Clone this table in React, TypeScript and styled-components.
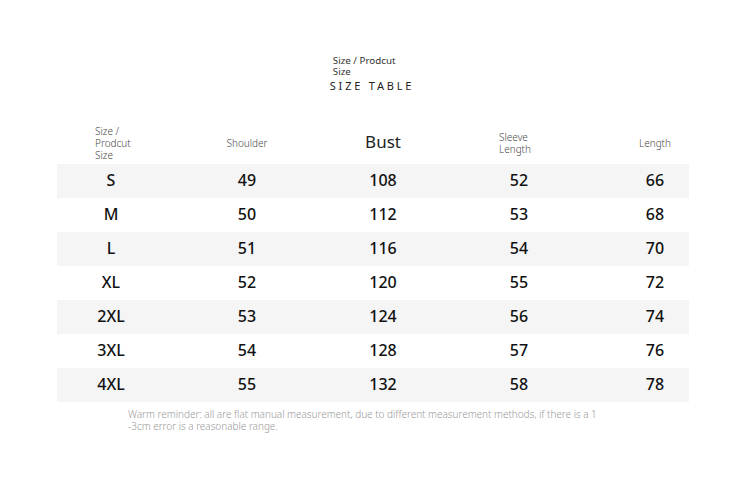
import React from "react";
import styled, { createGlobalStyle } from "styled-components";

const Global = createGlobalStyle`
  html, body { margin: 0; padding: 0; background: #ffffff; }
  body { font-family: "Noto Sans", "Open Sans", sans-serif; }
`;

const Page = styled.div`
  width: 750px;
  height: 480px;
  box-sizing: border-box;
  padding-top: 55px;
  padding-right: 4px;
  display: flex;
  flex-direction: column;
  align-items: center;
  overflow: hidden;
`;

const TitleBlock = styled.div`
  display: flex;
  flex-direction: column;
  align-items: flex-start;
  margin-right: 2px;
`;

const TitleSmall = styled.div`
  font-size: 9.8px;
  line-height: 11px;
  color: #333;
  padding-left: 3px;
`;

const TitleMain = styled.div`
  font-size: 11px;
  line-height: 14px;
  letter-spacing: 2.8px;
  color: #222;
  margin-top: 2px;
`;

const Table = styled.div`
  width: 632px;
  margin-top: 31px;
  display: flex;
  flex-direction: column;
`;

const cols = "122px 136px 136px 136px 102px";

const HeaderRow = styled.div`
  display: grid;
  grid-template-columns: ${cols};
  height: 38px;
  align-items: center;
  margin-bottom: 2px;
`;

const HeadCell = styled.div<{ $align?: "left" | "center"; $pl?: number; $pr?: number; $big?: boolean }>`
  display: flex;
  justify-content: ${(p) => (p.$align === "left" ? "flex-start" : "center")};
  padding-left: ${(p) => p.$pl ?? 0}px;
  padding-right: ${(p) => p.$pr ?? 0}px;
  padding-bottom: ${(p) => (p.$big ? "3px" : "0")};
  font-size: ${(p) => (p.$big ? "17px" : "10px")};
  line-height: ${(p) => (p.$big ? "20px" : "12px")};
  color: ${(p) => (p.$big ? "#222" : "#4a4a4a")};
  font-weight: ${(p) => (p.$big ? 400 : 300)};
`;

const HeadText = styled.span`
  text-align: left;
`;

const Row = styled.div<{ $shade: boolean }>`
  display: grid;
  grid-template-columns: ${cols};
  height: 34px;
  align-items: center;
  background: ${(p) => (p.$shade ? "#f5f5f5" : "#ffffff")};
`;

const Cell = styled.div<{ $pl?: number; $pr?: number }>`
  text-align: center;
  padding-left: ${(p) => p.$pl ?? 0}px;
  padding-right: ${(p) => p.$pr ?? 0}px;
  padding-bottom: 2px;
  font-size: 16px;
  font-weight: 500;
  color: #111;
  line-height: 20px;
`;

const Note = styled.div`
  width: 632px;
  box-sizing: border-box;
  padding-left: 71px;
  margin-top: 6px;
  font-size: 10px;
  letter-spacing: -0.02px;
  line-height: 12px;
  color: #9a9a9a;
  font-weight: 300;
  white-space: nowrap;
`;

const data: [string, number, number, number, number][] = [
  ["S", 49, 108, 52, 66],
  ["M", 50, 112, 53, 68],
  ["L", 51, 116, 54, 70],
  ["XL", 52, 120, 55, 72],
  ["2XL", 53, 124, 56, 74],
  ["3XL", 54, 128, 57, 76],
  ["4XL", 55, 132, 58, 78],
];

export default function App() {
  return (
    <>
      <Global />
      <Page>
        <TitleBlock>
          <TitleSmall>
            Size / Prodcut
            <br />
            Size
          </TitleSmall>
          <TitleMain>SIZE TABLE</TitleMain>
        </TitleBlock>
        <Table>
          <HeaderRow>
            <HeadCell $align="left" $pl={38}>
              <HeadText>
                Size /
                <br />
                Prodcut
                <br />
                Size
              </HeadText>
            </HeadCell>
            <HeadCell $pr={-6}>Shoulder</HeadCell>
            <HeadCell $big>Bust</HeadCell>
            <HeadCell $pr={8}>
              <HeadText>
                Sleeve
                <br />
                Length
              </HeadText>
            </HeadCell>
            <HeadCell $pl={34}>Length</HeadCell>
          </HeaderRow>
          {data.map((r, i) => (
            <Row key={r[0]} $shade={i % 2 === 0}>
              <Cell $pr={14}>{r[0]}</Cell>
              <Cell>{r[1]}</Cell>
              <Cell>{r[2]}</Cell>
              <Cell>{r[3]}</Cell>
              <Cell $pl={34}>{r[4]}</Cell>
            </Row>
          ))}
        </Table>
        <Note>
          Warm reminder: all are flat manual measurement, due to different measurement methods, if there is a 1
          <br />
          -3cm error is a reasonable range.
        </Note>
      </Page>
    </>
  );
}
